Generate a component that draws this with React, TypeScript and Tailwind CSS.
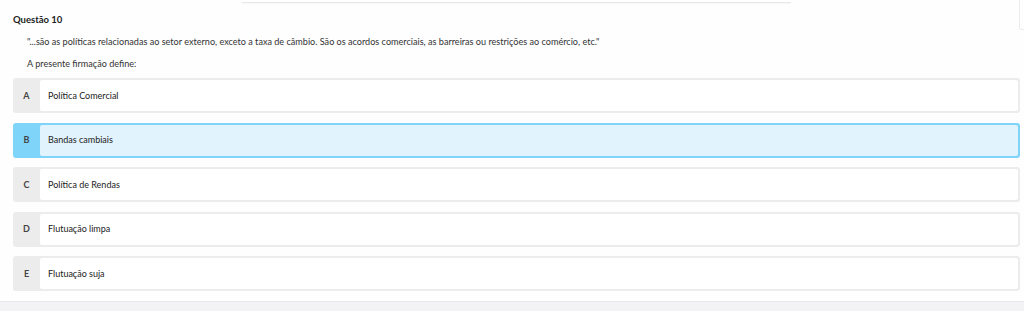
const options = [
  { letter: 'A', text: 'Política Comercial' },
  { letter: 'B', text: 'Bandas cambiais', selected: true },
  { letter: 'C', text: 'Política de Rendas' },
  { letter: 'D', text: 'Flutuação limpa' },
  { letter: 'E', text: 'Flutuação suja' },
];

export default function App() {
  return (
    <div
      className="relative w-[1024px] h-[311px] overflow-hidden bg-[#fefefe] text-[#333] flex flex-col"
      style={{ fontFamily: 'Lato, "Open Sans", sans-serif' }}
    >
      {/* cut-off panels from the page above */}
      <div className="h-[3px] ml-[242px] w-[549px] bg-white border-b border-[#e6e8ec] shadow-[0_1px_1px_rgba(0,0,0,0.03)]" />
      <div className="absolute left-[1019px] top-0 w-[10px] h-[30px] border-l border-b border-[#ececee] rounded-bl-[3px]" />

      <div className="flex-1 px-[13px] pt-[11px]">
        <div className="text-[9.5px] font-bold text-[#222] leading-[12px]">Questão 10</div>
        <p className="mt-[10px] ml-[14px] text-[9.1px] leading-[12px] text-[#333]">
          "...são as políticas relacionadas ao setor externo, exceto a taxa de câmbio. São os acordos comerciais, as barreiras ou restrições ao comércio, etc."
        </p>
        <p className="mt-[10px] ml-[14px] text-[9.1px] leading-[12px] text-[#333]">A presente firmação define:</p>

        <div className="mt-[8px] w-[1007px] flex flex-col gap-[9.5px]">
          {options.map((o) => (
            <div
              key={o.letter}
              className={
                o.selected
                  ? 'h-[35px] flex rounded-[3px] bg-[#7fd4fa] p-[2px] pl-0'
                  : 'h-[35px] flex rounded-[3px] bg-[#ececec] p-[2px] pl-0'
              }
            >
              <div className="w-[27px] flex items-center justify-center text-[9px] font-bold text-[#444]">
                {o.letter}
              </div>
              <div
                className={
                  o.selected
                    ? 'flex-1 flex items-center pl-[8px] rounded-[2px] bg-[#e1f3fc] text-[9px] text-[#222]'
                    : 'flex-1 flex items-center pl-[8px] rounded-[2px] bg-white text-[9px] text-[#222]'
                }
              >
                {o.text}
              </div>
            </div>
          ))}
        </div>
      </div>

      <div className="h-[10px] bg-[#f3f3f5] border-t border-[#e9e9eb]" />
    </div>
  );
}
